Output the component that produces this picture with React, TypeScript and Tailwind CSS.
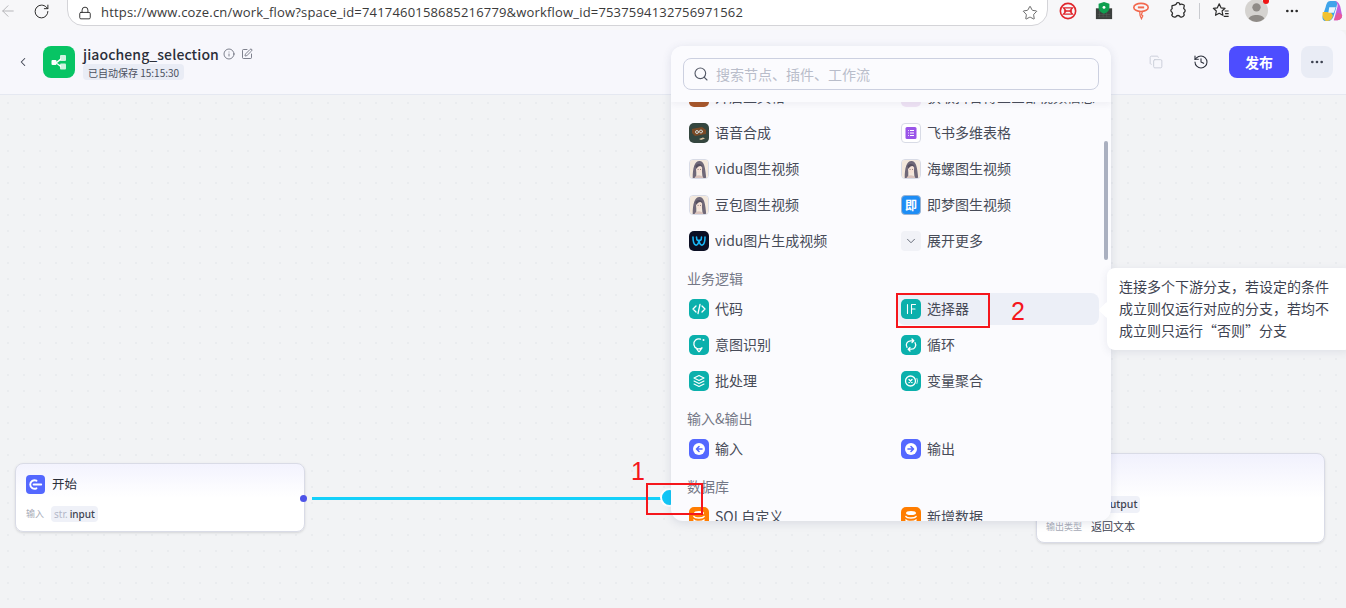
import { ArrowLeft, ChevronDown, ChevronLeft, Ellipsis, History, Info, Lock, RotateCw, Search, SquarePen, Star, Copy } from "lucide-react";
import type { ReactNode } from "react";

const FONT = "font-['Noto_Sans_CJK_SC','Noto_Sans',sans-serif]";

function Tile({ bg, children }: { bg: string; children: ReactNode }) {
  return (
    <span className={`flex h-5 w-5 shrink-0 items-center justify-center overflow-hidden rounded-[5px] ${bg}`}>
      <svg viewBox="0 0 20 20" className="h-5 w-5" fill="none" stroke="#fff" strokeWidth="1.3" strokeLinecap="round" strokeLinejoin="round">
        {children}
      </svg>
    </span>
  );
}

function Girl() {
  return (
    <span className="flex h-5 w-5 shrink-0 overflow-hidden rounded-[4px] border border-[#d8dbe6]">
      <svg viewBox="0 0 20 20" className="h-full w-full">
        <rect width="20" height="20" fill="#f3e8dc" />
        <path d="M3 20 C3 9 5 1 10.500 1 C16 1 17 9 18 20 L14 20 L13 10 L7 10 L7 20 Z" fill="#6f6878" />
        <path d="M6.500 9 C7 5 13 5 13.500 9 L13 13 L10 15.500 L7.500 13 Z" fill="#f6e2d6" />
        <path d="M6 6.500 C8 3.500 13 3.500 14 7.500 C11.500 6 9 6.500 7 10 Z" fill="#57505f" />
        <path d="M5 20 C6 16 13 15.500 15 20 Z" fill="#d9c2bc" />
        <path d="M8.500 10.500h1M11.200 10.500h1" stroke="#5a4a50" strokeWidth=".8" />
      </svg>
    </span>
  );
}

function Row({ icon, label, active }: { icon: ReactNode; label: string; active?: boolean }) {
  return (
    <div className={`my-[2px] flex h-8 items-center gap-[6px] rounded-lg pl-1 text-[14px] text-[#474b58] ${active ? "bg-[#eceff7]" : ""}`}>
      {icon}
      <span className="whitespace-nowrap pb-[2px]">{label}</span>
    </div>
  );
}

function SectionTitle({ children }: { children: ReactNode }) {
  return <div className="h-8 pl-[2px] pt-[7px] text-[14px] leading-6 text-[#737786]">{children}</div>;
}

const teal = "bg-[#0bb0ac]";
const blue = "bg-[#5468ff]";
const orange = "bg-[#ff7d00]";

const dbIcon = (
  <>
    <ellipse cx="10" cy="6" rx="5" ry="2" fill="#fff" stroke="none" />
    <path d="M5 9.500c1 2 9 2 10 0M5 13c1 2 9 2 10 0" strokeWidth="1.600" />
  </>
);

function ExtensionIcons() {
  return (
    <div className="ml-auto flex items-center">
      <svg viewBox="0 0 20 20" className="mr-[18px] h-[18px] w-[18px]" fill="none" stroke="#e0262c" strokeWidth="1.800">
        <circle cx="10" cy="10" r="8.500" />
        <path d="M5 6.500h10l-3 3.500 3 3.500H5l3-3.500zM5.500 10h9" strokeWidth="1.500" />
      </svg>
      <svg viewBox="0 0 20 20" className="mr-[19px] h-[18px] w-[18px]">
        <rect x="1" y="7" width="18" height="12" fill="#3b3f3d" />
        <path d="M3 14h14M3 16.500h14M5 10v7M9 10v7M13 10v7" stroke="#5a5e5c" strokeWidth=".6" />
        <path d="M10 0l6 2v4.800c0 3-3 5.200-6 6.200-3-1-6-3.200-6-6.200V2z" fill="#0e9f4f" />
        <circle cx="10" cy="6" r="1.600" fill="#fff" />
      </svg>
      <svg viewBox="0 0 20 20" className="mr-[19px] h-[18px] w-[18px]" fill="none" stroke="#f2694f" strokeWidth="1.800">
        <ellipse cx="10" cy="6" rx="8" ry="4.500" />
        <path d="M6.500 6h7" strokeWidth="2.200" />
        <path d="M8.500 10.500l.5 4.500 1.500 3.500 1.500-3-1.500-1.500 1-3" strokeWidth="1.400" />
      </svg>
      <svg viewBox="0 0 20 20" className="mr-[12px] h-[18px] w-[18px]" fill="none" stroke="#2b2b2b" strokeWidth="1.400" strokeLinejoin="round">
        <path d="M8 2.500a2 2 0 0 1 4 .500c1-1 5-.500 5 1 0 1.500-1 2.500-.500 3.500 1.500.500 2 3 .500 4-1 .500-.500 2 0 3-1 2-3 2.500-4.500 2-1-2-4-2-5 0-2 .500-4-.500-4.500-2 1-1 1-2.500 0-3.500-1.500-1-1-3 .500-3.500 0-1-.500-2.500 0-3.500 1.500-.500 3 0 4.500-1.500z" />
      </svg>
      <div className="mr-3 h-4 w-px bg-[#c9cbd0]" />
      <svg viewBox="0 0 20 20" className="mr-[15px] h-[18px] w-[18px]" fill="none" stroke="#2b2b2b" strokeWidth="1.300" strokeLinejoin="round">
        <path d="M8 2l2 4.500 4.500.500-3.300 3 .900 4.800L8 12.500 3.900 14.800l.900-4.800L1.500 7 6 6.500z" />
        <path d="M14 10h4.500M14.500 13h4M13 16h5.500" />
      </svg>
      <div className="relative mr-[16px] h-[23px] w-[23px] -translate-y-[1px] rounded-full bg-[#d5d3d0]">
        <svg viewBox="0 0 22 22" className="h-[23px] w-[23px]" fill="#8f8b87">
          <circle cx="11" cy="8" r="4" />
          <path d="M3.500 19c1-5 14-5 15 0a11 11 0 0 1-15 0z" />
        </svg>
        <span className="absolute -right-[1px] -top-[1px] h-[6px] w-[6px] rounded-full bg-[#f01414]" />
      </div>
      <Ellipsis className="mr-[21px] h-4 w-4 text-[#2b2b2b]" strokeWidth={2} />
      <svg viewBox="0 0 24 24" className="mr-[3px] h-[22px] w-[22px]">
        <path d="M10 1h5c3 0 3 3 2 6l-3 10c-1 3-3 6-6 6H5c-3 0-4-3-3-6l3-9C6 4 7 1 10 1z" fill="#3fa4ea" />
        <path d="M15 1c3 0 5 3 6 6l2 10c0 3-2 5-5 5h-4l4-15c.500-2-1-6-3-6z" fill="#c15fdc" />
        <path d="M2 13c-1 4 0 9 4 10 4 0 6-2 7-6l-2-3-5-1z" fill="#f2c230" />
        <path d="M14 22h4c3 0 5-2 5-5-1-2-3-3-5-3z" fill="#e8589c" />
        <path d="M9 8h7l-2 6H8z" fill="#fff" opacity=".9" />
      </svg>
    </div>
  );
}

export default function App() {
  return (
    <div className={`relative flex h-[608px] w-[1346px] flex-col overflow-hidden bg-[#f2f3f5] ${FONT}`}>
      {/* browser toolbar */}
      <div className="flex h-[30px] shrink-0 items-start bg-[#f7f7f9]">
        <div className="flex h-[22px] items-center">
          <ArrowLeft className="-ml-[1px] mr-[16px] h-[18px] w-[18px] text-[#b5b5b8]" strokeWidth={1.300} />
          <RotateCw className="mr-[17px] h-[17px] w-[17px] text-[#2b2b2b]" strokeWidth={1.400} />
        </div>
        <div className="-mt-[6px] flex h-[32px] w-[981px] shrink-0 items-center rounded-b-[16px] border border-[#d4d4d8] bg-white pl-[10px] pr-[9px] pt-[6px]">
          <Lock className="mr-[9px] h-[14px] w-[14px] text-[#2b2b2b]" strokeWidth={1.600} />
          <span className="font-['Open_Sans',sans-serif] text-[13px] tracking-[0.18px] text-[#3a3a3a]">
            https://www.coze.cn/work_flow?space_id=7417460158685216779&amp;workflow_id=7537594132756971562
          </span>
          <Star className="ml-auto h-4 w-4 text-[#555]" strokeWidth={1.300} />
        </div>
        <div className="flex h-[22px] flex-1 items-center">
          <ExtensionIcons />
        </div>
      </div>

      {/* workflow header */}
      <header className="flex h-[65px] shrink-0 items-center rounded-tr-lg border-b border-[#e5e8f1] bg-[#f7f7fc] pl-[16px] pr-[13px]">
        <ChevronLeft className="mr-[13px] h-[14px] w-[14px] text-[#3d4250]" strokeWidth={1.800} />
        <div className="mr-2 flex h-8 w-8 items-center justify-center rounded-lg bg-[#07c464]">
          <svg viewBox="0 0 20 20" className="h-5 w-5" fill="#fff">
            <rect x="2.500" y="8" width="5" height="5" rx="1" />
            <rect x="11" y="3" width="6" height="6" rx="1" opacity=".8" />
            <rect x="11" y="11.500" width="6" height="6" rx="1" opacity=".8" />
            <path d="M7 10l5-4v2l-4 3 4 2.500v2l-5-4z" />
          </svg>
        </div>
        <div className="flex flex-col items-start">
          <div className="flex h-[18px] items-center pt-[1px]">
            <span className="text-[14px] font-medium leading-[18px] tracking-[0.1px] text-[#2b2f3a]">jiaocheng_selection</span>
            <Info className="ml-[4px] h-3 w-3 text-[#555a68]" strokeWidth={1.500} />
            <SquarePen className="ml-[6px] h-3 w-3 text-[#555a68]" strokeWidth={1.500} />
          </div>
          <span className="mt-[2px] flex h-4 items-center rounded-[4px] bg-[#e9ecf5] px-[5px] text-[10px] text-[#4b5060]">已自动保存 15:15:30</span>
        </div>
        <div className="ml-auto flex items-center">
          <Copy className="mr-[30px] h-[14px] w-[14px] text-[#c6cad6]" strokeWidth={1.500} />
          <History className="mr-[20px] h-[16px] w-[16px] text-[#2b2f3a]" strokeWidth={1.600} />
          <button className="mr-3 h-8 w-[60px] rounded-lg bg-[#4d4dff] text-[14px] font-bold text-white">发布</button>
          <button className="flex h-8 w-8 items-center justify-center rounded-lg bg-[#e9ecf5]">
            <Ellipsis className="h-4 w-4 text-[#3d4250]" />
          </button>
        </div>
      </header>

      {/* canvas */}
      <main className="relative flex-1 bg-[#f2f3f5] bg-[radial-gradient(#eaecef_1px,transparent_1px)] bg-[length:16px_16px]">
        {/* start node */}
        <div className="absolute left-[15px] top-[368px] h-[69px] w-[290px] rounded-lg border border-[#d9dbe6] bg-gradient-to-b from-[#f3f3fe] to-white to-50% shadow-sm">
          <div className="flex items-center gap-[7px] pl-[10px] pt-[11px]">
            <span className="flex h-[19px] w-[19px] items-center justify-center rounded-[4px] bg-[#5468ff]">
              <svg viewBox="0 0 20 20" className="h-[19px] w-[19px]" fill="none" stroke="#fff" strokeWidth="2" strokeLinecap="round">
                <path d="M11 6a4.500 4.500 0 1 0 0 8" />
                <path d="M8 10h8" />
              </svg>
            </span>
            <span className="text-[12.500px] text-[#2b2f3a]">开始</span>
          </div>
          <div className="mt-[12px] flex items-center gap-[7px] pl-[10px]">
            <span className="text-[9px] text-[#a8acb8]">输入</span>
            <span className="flex h-4 items-center gap-[2px] rounded-[4px] bg-[#eff1f8] px-[3px] font-['Noto_Sans',sans-serif] text-[10px]">
              <span className="text-[#b4b8c8]">str.</span>
              <span className="font-medium text-[#3d4250]">input</span>
            </span>
          </div>
        </div>
        <span className="absolute left-[300px] top-[400px] h-[7px] w-[7px] rounded-full bg-[#4d53e8]" />
        <div className="absolute left-[312px] top-[402px] h-[3px] w-[352px] bg-[#14d0fa]" />
        <span className="absolute left-[660px] top-[393px] h-[19px] w-[19px] rounded-full border-2 border-white bg-[#12c8f8]" />

        {/* end node */}
        <div className="absolute left-[1036px] top-[358px] h-[90px] w-[289px] rounded-lg border border-[#d9dbe6] bg-gradient-to-b from-[#f1f1fd] to-white to-50% shadow-sm">
          <div className="mt-[42px] flex items-center gap-[2px] pl-[9px]">
            <span className="w-[36px] text-[9px] text-[#a8acb8]">输出变量</span>
            <span className="flex h-[17px] items-center gap-[2px] rounded-[4px] bg-[#eff1f8] px-[3px] font-['Noto_Sans',sans-serif] text-[10.500px]">
              <span className="text-[#b4b8c8]">str.</span>
              <span className="font-medium text-[#3d4250]">output</span>
            </span>
          </div>
          <div className="mt-[5px] flex items-center gap-[9px] pl-[9px]">
            <span className="text-[9px] text-[#a8acb8]">输出类型</span>
            <span className="text-[11px] text-[#3d4250]">返回文本</span>
          </div>
        </div>

        {/* node picker panel */}
        <div className="absolute left-[671px] -top-[49px] flex h-[475px] w-[440px] flex-col overflow-hidden rounded-xl bg-[#fbfbfe] shadow-[0_2px_10px_rgba(60,70,110,0.14)]">
          <div className="relative z-10 h-[56px] shrink-0 bg-[#fbfbfe] px-3 pt-3 shadow-[0_3px_6px_rgba(60,70,110,0.06)]">
            <div className="flex h-8 items-center gap-[7px] rounded-lg border border-[#ccd0e0] pl-[9px] text-[14px] text-[#b9bdca]">
              <Search className="h-[16px] w-[16px] text-[#555a68]" strokeWidth={1.700} />
              搜索节点、插件、工作流
            </div>
          </div>
          <div className="relative flex-1 overflow-hidden">
            <div className="-mt-[23px] pl-[14px]">
              <div className="grid grid-cols-[212px_202px]">
                <Row icon={<Tile bg="bg-[#a8572a]"><circle cx="10" cy="8" r="3" /></Tile>} label="开启工具格" />
                <Row icon={<Tile bg="bg-[#efe3f5]"><path d="M4 14h12" stroke="#b28ad0" /></Tile>} label="获取抖音博主全部视频信息" />
                <Row icon={<Tile bg="bg-[#34463f]"><path d="M3 6l10-2 4 3v4L6 13 3 10z" fill="#7a4a26" stroke="none" /><circle cx="8" cy="9" r="1.500" stroke="#cfd8d8" strokeWidth="1" /><circle cx="12" cy="8.500" r="1.500" stroke="#cfd8d8" strokeWidth="1" /><path d="M10 16l4-1.500 2 1-4 1.500z" fill="#d9c3a0" stroke="none" /></Tile>} label="语音合成" />
                <Row icon={<span className="flex h-5 w-5 shrink-0 items-center justify-center rounded-[4px] border border-[#d8dbe6] bg-white"><svg viewBox="0 0 14 14" className="h-[14px] w-[14px]"><rect x="1.500" y="1" width="11" height="12" rx="1.500" fill="#9a55e8" /><path d="M6 4.500h4M6 7h4M6 9.500h4" stroke="#fff" /><path d="M4 4.500h.8M4 7h.8M4 9.500h.8" stroke="#fff" /></svg></span>} label="飞书多维表格" />
                <Row icon={<Girl />} label="vidu图生视频" />
                <Row icon={<Girl />} label="海螺图生视频" />
                <Row icon={<Girl />} label="豆包图生视频" />
                <Row icon={<span className="flex h-5 w-5 shrink-0 items-center justify-center rounded-[4px] border border-[#9cb4d2] bg-[#1d8df5] text-[12px] font-bold leading-none text-white">即</span>} label="即梦图生视频" />
                <Row icon={<Tile bg="bg-[#0b0f24]"><path d="M4 6c0 10 5 10 6 4 1 6 6 6 6-4M7.500 6c0 4 2 4 2.500 3 .5 1 2.500 1 2.500-3" stroke="#19b6f6" strokeWidth="1.600" /></Tile>} label="vidu图片生成视频" />
                <Row icon={<span className="flex h-5 w-5 shrink-0 items-center justify-center rounded-[4px] bg-[#f1f2f7]"><ChevronDown className="h-[14px] w-[14px] text-[#555a68]" strokeWidth={1.500} /></span>} label="展开更多" />
              </div>
              <SectionTitle>业务逻辑</SectionTitle>
              <div className="grid grid-cols-[212px_202px]">
                <Row icon={<Tile bg={teal}><path d="M7 7l-3 3 3 3M13 7l3 3-3 3M11 5.500l-2 9" /></Tile>} label="代码" />
                <Row active icon={<Tile bg={teal}><path d="M6.500 5.500v9M10.500 14.500v-9h4M10.500 10h3.500" strokeWidth="1.100" /></Tile>} label="选择器" />
                <Row icon={<Tile bg={teal}><path d="M11.500 4.200a5 5 0 1 0 1.500 8.600L10.500 16.500H9.500L7 12.800" /><circle cx="14.500" cy="5" r="1" fill="#fff" stroke="none" /></Tile>} label="意图识别" />
                <Row icon={<Tile bg={teal}><path d="M12.500 5.800h-3a4.200 4.200 0 0 0-3.500 6.500M7.500 14.200h3a4.200 4.200 0 0 0 3.500-6.500M11 4l1.800 1.800L11 7.600M9 12.400l-1.800 1.800L9 16" /></Tile>} label="循环" />
                <Row icon={<Tile bg={teal}><path d="M10 4.500l5 2.500-5 2.500L5 7zM5 10l5 2.500 5-2.500M5 13l5 2.500 5-2.500" strokeWidth="1.100" /></Tile>} label="批处理" />
                <Row icon={<Tile bg={teal}><circle cx="9.500" cy="10" r="5" /><path d="M8 8.500l3 3M11 8.500l-3 3" /><path d="M16 7.500a6 6 0 0 1 0 5" strokeWidth=".8" /></Tile>} label="变量聚合" />
              </div>
              <SectionTitle>输入&amp;输出</SectionTitle>
              <div className="grid grid-cols-[212px_202px]">
                <Row icon={<Tile bg={blue}><circle cx="10" cy="10" r="6" fill="#fff" stroke="none" /><path d="M13 10H8M10 7.500L7.500 10l2.500 2.500" stroke="#5468ff" strokeWidth="1.600" /></Tile>} label="输入" />
                <Row icon={<Tile bg={blue}><circle cx="10" cy="10" r="6" fill="#fff" stroke="none" /><path d="M7 10h5M10 7.500l2.500 2.500-2.500 2.500" stroke="#5468ff" strokeWidth="1.600" /></Tile>} label="输出" />
              </div>
              <SectionTitle>数据库</SectionTitle>
              <div className="grid grid-cols-[212px_202px]">
                <Row icon={<Tile bg={orange}>{dbIcon}</Tile>} label="SQL自定义" />
                <Row icon={<Tile bg={orange}>{dbIcon}</Tile>} label="新增数据" />
              </div>
            </div>
            <div className="absolute right-[3px] top-[39px] h-[119px] w-1 rounded-full bg-[#aab0c0]" />
          </div>
        </div>

        {/* tooltip */}
        <div className="absolute left-[1107px] top-[173px] h-[82px] w-[245px] rounded-lg bg-white py-[7px] pl-3 text-[14px] leading-[22px] text-[#3d4250] shadow-[0_2px_8px_rgba(60,70,110,0.1)]">
          <span className="absolute -left-[6px] top-[36px] h-3 w-3 rotate-45 rounded-[2px] bg-white" />
          <p className="relative w-[215px]">连接多个下游分支，若设定的条件成立则仅运行对应的分支，若均不成立则只运行“否则”分支</p>
        </div>

        {/* red annotations */}
        <div className="absolute left-[896px] top-[198px] h-[35px] w-[94px] border-2 border-[#f5161c]" />
        <span className="absolute left-[1011px] top-[199px] font-['Liberation_Sans',sans-serif] text-[25px] leading-[34px] text-[#f5161c]">2</span>
        <div className="absolute left-[646px] top-[388px] h-[32px] w-[57px] border-2 border-[#f5161c]" />
        <span className="absolute left-[631px] top-[359px] font-['Liberation_Sans',sans-serif] text-[25px] leading-[34px] text-[#f5161c]">1</span>
      </main>
    </div>
  );
}
